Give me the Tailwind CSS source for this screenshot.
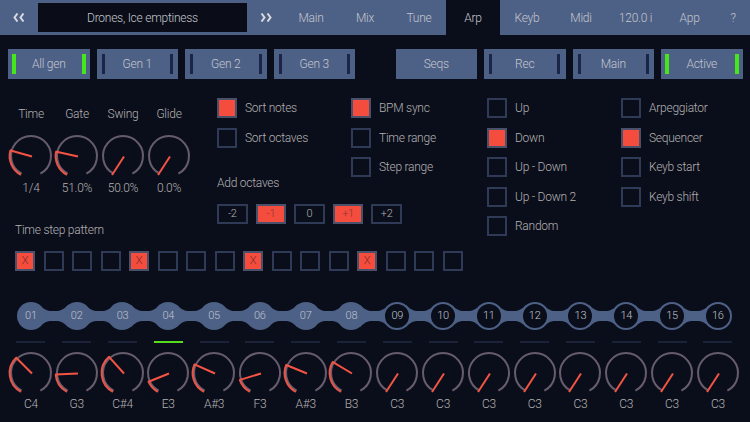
<!DOCTYPE html>
<html>
<head>
<meta charset="utf-8">
<script src="https://cdn.jsdelivr.net/npm/@tailwindcss/browser@4"></script>
</head>
<body class="m-0 w-[750px] h-[422px] overflow-hidden bg-[#0a0e1a] text-[12px] tracking-[-0.25px] font-light leading-4 text-[#b4b0b2] font-['Roboto','Liberation_Sans',sans-serif]">

<header class="flex h-[35px] bg-[#4d6086] text-[#c4c6cd]">
  <div class="flex w-[38px] items-center justify-center">
    <svg width="12" height="9" viewBox="0 0 12 9" fill="none" stroke="#d8dae0" stroke-width="2"><path d="M4.5 .5 1.5 4.5 4.5 8.5M10.5 .5 7.5 4.5 10.5 8.5"/></svg>
  </div>
  <div class="my-[3px] flex w-[209px] items-center justify-center bg-[#0a0d18]">Drones, Ice emptiness</div>
  <div class="flex w-[37px] items-center justify-center">
    <svg width="12" height="9" viewBox="0 0 12 9" fill="none" stroke="#d8dae0" stroke-width="2"><path d="M1.5 .5 4.5 4.5 1.5 8.5M7.5 .5 10.5 4.5 7.5 8.5"/></svg>
  </div>
  <div class="flex w-[54px] items-center justify-center">Main</div>
  <div class="flex w-[54px] items-center justify-center">Mix</div>
  <div class="flex w-[54px] items-center justify-center">Tune</div>
  <div class="flex w-[54px] items-center justify-center bg-[#0a0e1a]">Arp</div>
  <div class="flex w-[54px] items-center justify-center">Keyb</div>
  <div class="flex w-[54px] items-center justify-center">Midi</div>
  <div class="flex w-[55px] items-center justify-center">120.0 i</div>
  <div class="flex w-[53px] items-center justify-center">App</div>
  <div class="flex w-[34px] items-center justify-center">?</div>
</header>

<nav class="mt-[14px] flex h-[30px] gap-[7px] pl-[8px] text-[#c4c6cd]">
  <div class="flex w-[81.5px] items-center justify-between bg-[#4d6086] px-[4px]"><i class="h-5 w-1 bg-[#46e61c]"></i><span>All gen</span><i class="h-5 w-1 bg-[#46e61c]"></i></div>
  <div class="flex w-[81.5px] items-center justify-between bg-[#4d6086] px-[5px]"><i class="h-5 w-[3px] bg-[#1a2548]"></i><span>Gen 1</span><i class="h-5 w-[3px] bg-[#1a2548]"></i></div>
  <div class="flex w-[81.5px] items-center justify-between bg-[#4d6086] px-[5px]"><i class="h-5 w-[3px] bg-[#1a2548]"></i><span>Gen 2</span><i class="h-5 w-[3px] bg-[#1a2548]"></i></div>
  <div class="flex w-[81.5px] items-center justify-between bg-[#4d6086] px-[5px]"><i class="h-5 w-[3px] bg-[#1a2548]"></i><span>Gen 3</span><i class="h-5 w-[3px] bg-[#1a2548]"></i></div>
  <div class="ml-[33.5px] flex w-[81.5px] items-center justify-center bg-[#4d6086]">Seqs</div>
  <div class="flex w-[81.5px] items-center justify-between bg-[#4d6086] px-[5px]"><i class="h-5 w-[3px] bg-[#1a2548]"></i><span>Rec</span><i class="h-5 w-[3px] bg-[#1a2548]"></i></div>
  <div class="flex w-[81.5px] items-center justify-between bg-[#4d6086] px-[5px]"><i class="h-5 w-[3px] bg-[#1a2548]"></i><span>Main</span><i class="h-5 w-[3px] bg-[#1a2548]"></i></div>
  <div class="flex w-[81.5px] items-center justify-between bg-[#4d6086] px-[4px]"><i class="h-5 w-1 bg-[#46e61c]"></i><span>Active</span><i class="h-5 w-1 bg-[#46e61c]"></i></div>
</nav>

<main class="mt-[19px] flex">
  <section class="w-[487px]">
    <div class="flex">
      <div class="flex w-[217px] pl-[8px] pt-[8px] text-center">
        <div class="w-[46px]"><p>Time</p><svg class="mt-[10.5px] overflow-visible" width="46" height="46" data-a="-75"></svg><p class="mt-[1.5px]">1/4</p></div>
        <div class="w-[46px]"><p>Gate</p><svg class="mt-[10.5px] overflow-visible" width="46" height="46" data-a="-78"></svg><p class="mt-[1.5px]">51.0%</p></div>
        <div class="w-[46px]"><p>Swing</p><svg class="mt-[10.5px] overflow-visible" width="46" height="46" data-a="-150"></svg><p class="mt-[1.5px]">50.0%</p></div>
        <div class="w-[46px]"><p>Glide</p><svg class="mt-[10.5px] overflow-visible" width="46" height="46" data-a="-150"></svg><p class="mt-[1.5px]">0.0%</p></div>
      </div>
      <div class="w-[270px]">
        <div class="grid grid-cols-[134px_134px] gap-y-[9.6px]">
          <label class="flex h-5 items-center gap-2"><span class="size-5 border-2 border-[#4a5069] bg-[#f44c3d]"></span>Sort notes</label>
          <label class="flex h-5 items-center gap-2"><span class="size-5 border-2 border-[#4a5069] bg-[#f44c3d]"></span>BPM sync</label>
          <label class="flex h-5 items-center gap-2"><span class="size-5 border-2 border-[#2f3a57]"></span>Sort octaves</label>
          <label class="flex h-5 items-center gap-2"><span class="size-5 border-2 border-[#2f3a57]"></span>Time range</label>
          <span></span>
          <label class="flex h-5 items-center gap-2"><span class="size-5 border-2 border-[#2f3a57]"></span>Step range</label>
        </div>
        <p class="leading-3">Add octaves</p>
        <div class="mt-[15px] flex h-5 gap-[8px] text-[11px]">
          <div class="flex w-[30.6px] items-center justify-center border-2 border-[#2f3a57]">-2</div>
          <div class="flex w-[30.6px] items-center justify-center border-2 border-[#4a5069] bg-[#f44c3d] text-[#8b3a36]">-1</div>
          <div class="flex w-[30.6px] items-center justify-center border-2 border-[#2f3a57]">0</div>
          <div class="flex w-[30.6px] items-center justify-center border-2 border-[#4a5069] bg-[#f44c3d] text-[#8b3a36]">+1</div>
          <div class="flex w-[30.6px] items-center justify-center border-2 border-[#2f3a57]">+2</div>
        </div>
      </div>
    </div>
    <p class="pl-[15px] leading-3">Time step pattern</p>
    <div class="mt-[15px] flex h-5 gap-[8.5px] pl-[15px] text-[11px] text-[#7d2b28]">
      <div class="flex size-5 items-center justify-center border-2 border-[#4a5069] bg-[#f44c3d]">X</div>
      <div class="size-5 border-2 border-[#2f3a57]"></div>
      <div class="size-5 border-2 border-[#2f3a57]"></div>
      <div class="size-5 border-2 border-[#2f3a57]"></div>
      <div class="flex size-5 items-center justify-center border-2 border-[#4a5069] bg-[#f44c3d]">X</div>
      <div class="size-5 border-2 border-[#2f3a57]"></div>
      <div class="size-5 border-2 border-[#2f3a57]"></div>
      <div class="size-5 border-2 border-[#2f3a57]"></div>
      <div class="flex size-5 items-center justify-center border-2 border-[#4a5069] bg-[#f44c3d]">X</div>
      <div class="size-5 border-2 border-[#2f3a57]"></div>
      <div class="size-5 border-2 border-[#2f3a57]"></div>
      <div class="size-5 border-2 border-[#2f3a57]"></div>
      <div class="flex size-5 items-center justify-center border-2 border-[#4a5069] bg-[#f44c3d]">X</div>
      <div class="size-5 border-2 border-[#2f3a57]"></div>
      <div class="size-5 border-2 border-[#2f3a57]"></div>
      <div class="size-5 border-2 border-[#2f3a57]"></div>
    </div>
  </section>
  <section class="flex w-[263px]">
    <div class="flex w-[134px] flex-col gap-[9.6px]">
      <label class="flex h-5 items-center gap-2"><span class="size-5 border-2 border-[#2f3a57]"></span>Up</label>
      <label class="flex h-5 items-center gap-2"><span class="size-5 border-2 border-[#4a5069] bg-[#f44c3d]"></span>Down</label>
      <label class="flex h-5 items-center gap-2"><span class="size-5 border-2 border-[#2f3a57]"></span>Up - Down</label>
      <label class="flex h-5 items-center gap-2"><span class="size-5 border-2 border-[#2f3a57]"></span>Up - Down 2</label>
      <label class="flex h-5 items-center gap-2"><span class="size-5 border-2 border-[#2f3a57]"></span>Random</label>
    </div>
    <div class="flex w-[129px] flex-col gap-[9.6px]">
      <label class="flex h-5 items-center gap-2"><span class="size-5 border-2 border-[#2f3a57]"></span>Arpeggiator</label>
      <label class="flex h-5 items-center gap-2"><span class="size-5 border-2 border-[#4a5069] bg-[#f44c3d]"></span>Sequencer</label>
      <label class="flex h-5 items-center gap-2"><span class="size-5 border-2 border-[#2f3a57]"></span>Keyb start</label>
      <label class="flex h-5 items-center gap-2"><span class="size-5 border-2 border-[#2f3a57]"></span>Keyb shift</label>
    </div>
  </section>
</main>

<section class="mt-[31px] pl-[8px]">
  <div class="relative">
    <svg class="absolute left-0 top-0" width="734" height="28" fill="#4d6086">
      <defs><path id="link" d="M8.5 2.8C13 7.5 16 9 21 9H24.8C29.8 9 32.8 7.5 37.3 2.8V25.2C32.8 20.5 29.8 19 24.8 19H21C16 19 13 20.5 8.5 25.2Z"/></defs>
      <use href="#link" x="22.9"/><use href="#link" x="68.7"/><use href="#link" x="114.5"/><use href="#link" x="160.3"/><use href="#link" x="206.1"/><use href="#link" x="251.9"/><use href="#link" x="297.7"/><use href="#link" x="343.5"/><use href="#link" x="389.3"/><use href="#link" x="435.1"/><use href="#link" x="480.9"/><use href="#link" x="526.7"/><use href="#link" x="572.5"/><use href="#link" x="618.3"/><use href="#link" x="664.1"/>
    </svg>
    <div class="relative grid h-7 grid-cols-[repeat(16,45.8px)] justify-items-center text-[11px] text-[#c0c3cc]">
      <div class="flex size-7 items-center justify-center rounded-full bg-[#4d6086]">01</div>
      <div class="flex size-7 items-center justify-center rounded-full bg-[#4d6086]">02</div>
      <div class="flex size-7 items-center justify-center rounded-full bg-[#4d6086]">03</div>
      <div class="flex size-7 items-center justify-center rounded-full bg-[#4d6086]">04</div>
      <div class="flex size-7 items-center justify-center rounded-full bg-[#4d6086]">05</div>
      <div class="flex size-7 items-center justify-center rounded-full bg-[#4d6086]">06</div>
      <div class="flex size-7 items-center justify-center rounded-full bg-[#4d6086]">07</div>
      <div class="flex size-7 items-center justify-center rounded-full bg-[#4d6086]">08</div>
      <div class="flex size-7 items-center justify-center rounded-full border-2 border-[#4d6086] bg-[#0a0e1a]">09</div>
      <div class="flex size-7 items-center justify-center rounded-full border-2 border-[#4d6086] bg-[#0a0e1a]">10</div>
      <div class="flex size-7 items-center justify-center rounded-full border-2 border-[#4d6086] bg-[#0a0e1a]">11</div>
      <div class="flex size-7 items-center justify-center rounded-full border-2 border-[#4d6086] bg-[#0a0e1a]">12</div>
      <div class="flex size-7 items-center justify-center rounded-full border-2 border-[#4d6086] bg-[#0a0e1a]">13</div>
      <div class="flex size-7 items-center justify-center rounded-full border-2 border-[#4d6086] bg-[#0a0e1a]">14</div>
      <div class="flex size-7 items-center justify-center rounded-full border-2 border-[#4d6086] bg-[#0a0e1a]">15</div>
      <div class="flex size-7 items-center justify-center rounded-full border-2 border-[#4d6086] bg-[#0a0e1a]">16</div>
    </div>
  </div>
  <div class="mt-[10.5px] grid h-[2.5px] grid-cols-[repeat(16,45.8px)] justify-items-center">
    <i class="w-[29px] bg-[#1b2137]"></i><i class="w-[29px] bg-[#1b2137]"></i><i class="w-[29px] bg-[#1b2137]"></i><i class="w-[29px] bg-[#55dc1c]"></i>
    <i class="w-[29px] bg-[#1b2137]"></i><i class="w-[29px] bg-[#1b2137]"></i><i class="w-[29px] bg-[#1b2137]"></i><i class="w-[29px] bg-[#1b2137]"></i>
    <i class="w-[29px] bg-[#1b2137]"></i><i class="w-[29px] bg-[#1b2137]"></i><i class="w-[29px] bg-[#1b2137]"></i><i class="w-[29px] bg-[#1b2137]"></i>
    <i class="w-[29px] bg-[#1b2137]"></i><i class="w-[29px] bg-[#1b2137]"></i><i class="w-[29px] bg-[#1b2137]"></i><i class="w-[29px] bg-[#1b2137]"></i>
  </div>
  <div class="mt-[6.5px] grid grid-cols-[repeat(16,45.8px)] justify-items-center text-center">
    <div><svg class="overflow-visible" width="46" height="46" data-a="-44"></svg><p class="mt-[0.5px]">C4</p></div>
    <div><svg class="overflow-visible" width="46" height="46" data-a="-94"></svg><p class="mt-[0.5px]">G3</p></div>
    <div><svg class="overflow-visible" width="46" height="46" data-a="-41"></svg><p class="mt-[0.5px]">C#4</p></div>
    <div><svg class="overflow-visible" width="46" height="46" data-a="-114"></svg><p class="mt-[0.5px]">E3</p></div>
    <div><svg class="overflow-visible" width="46" height="46" data-a="-66"></svg><p class="mt-[0.5px]">A#3</p></div>
    <div><svg class="overflow-visible" width="46" height="46" data-a="-109"></svg><p class="mt-[0.5px]">F3</p></div>
    <div><svg class="overflow-visible" width="46" height="46" data-a="-68"></svg><p class="mt-[0.5px]">A#3</p></div>
    <div><svg class="overflow-visible" width="46" height="46" data-a="-59"></svg><p class="mt-[0.5px]">B3</p></div>
    <div><svg class="overflow-visible" width="46" height="46" data-a="-150"></svg><p class="mt-[0.5px]">C3</p></div>
    <div><svg class="overflow-visible" width="46" height="46" data-a="-150"></svg><p class="mt-[0.5px]">C3</p></div>
    <div><svg class="overflow-visible" width="46" height="46" data-a="-150"></svg><p class="mt-[0.5px]">C3</p></div>
    <div><svg class="overflow-visible" width="46" height="46" data-a="-150"></svg><p class="mt-[0.5px]">C3</p></div>
    <div><svg class="overflow-visible" width="46" height="46" data-a="-150"></svg><p class="mt-[0.5px]">C3</p></div>
    <div><svg class="overflow-visible" width="46" height="46" data-a="-150"></svg><p class="mt-[0.5px]">C3</p></div>
    <div><svg class="overflow-visible" width="46" height="46" data-a="-150"></svg><p class="mt-[0.5px]">C3</p></div>
    <div><svg class="overflow-visible" width="46" height="46" data-a="-150"></svg><p class="mt-[0.5px]">C3</p></div>
  </div>
</section>

<script>
  // Each knob is drawn from its angle (degrees clockwise from 12 o'clock).
  function pt(r, deg) {
    var a = deg * Math.PI / 180;
    return (23 + r * Math.sin(a)).toFixed(2) + ' ' + (23 - r * Math.cos(a)).toFixed(2);
  }
  function arc(r, from, to) {
    return 'M' + pt(r, from) + 'A' + r + ' ' + r + ' 0 ' + (to - from > 180 ? 1 : 0) + ' 1 ' + pt(r, to);
  }
  document.querySelectorAll('svg[data-a]').forEach(function (svg) {
    var v = +svg.dataset.a, start = -152, html = '';
    html += '<path d="' + arc(20, start, 152) + '" fill="none" stroke="#675c6d" stroke-width="2"/>';
    if (v > start + 5) {
      html += '<path d="' + arc(21.3, start, v) + '" fill="none" stroke="#e0564a" stroke-width="2.2"/>';
    }
    html += '<path d="M24 23.5L' + pt(22, v) + '" fill="none" stroke="#f45444" stroke-width="2"/>';
    svg.innerHTML = html;
  });
</script>
</body>
</html>
